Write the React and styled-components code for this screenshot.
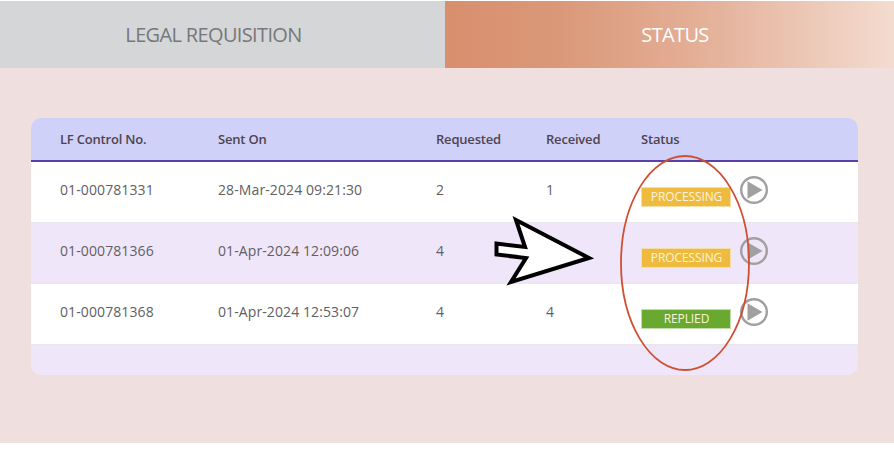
import styled, { createGlobalStyle } from "styled-components";

const rows = [
  { id: "01-000781331", sent: "28-Mar-2024 09:21:30", requested: "2", received: "1", status: "PROCESSING" },
  { id: "01-000781366", sent: "01-Apr-2024 12:09:06", requested: "4", received: "", status: "PROCESSING" },
  { id: "01-000781368", sent: "01-Apr-2024 12:53:07", requested: "4", received: "4", status: "REPLIED" },
];

const GlobalStyle = createGlobalStyle`
  html, body {
    margin: 0;
    padding: 0;
    background: #fff;
    font-family: "Open Sans", "Liberation Sans", sans-serif;
  }
`;

const Page = styled.div`
  position: relative;
  width: 894px;
  height: 457px;
  overflow: hidden;
  padding-top: 1px;
  box-sizing: border-box;
`;

const Tabs = styled.div`
  display: flex;
  height: 67px;
`;

const Tab = styled.div`
  flex: ${(props) => (props.$active ? "0 0 449px" : "0 0 445px")};
  display: flex;
  align-items: center;
  justify-content: center;
  padding-left: ${(props) => (props.$active ? "11px" : "0")};
  padding-right: ${(props) => (props.$active ? "0" : "18px")};
  padding-bottom: 1px;
  box-sizing: border-box;
  font-size: 20px;
  letter-spacing: -0.65px;
  color: ${(props) => (props.$active ? "#fff" : "#77787a")};
  background: ${(props) =>
    props.$active
      ? "linear-gradient(90deg, #d88f6e 0%, #da9878 25%, #e5b29b 60%, #f3dccf 100%)"
      : "#d4d6d8"};
`;

const Body = styled.div`
  height: 375px;
  padding: 50px 36px 0 31px;
  box-sizing: border-box;
  background: #efdfdf;
`;

const Card = styled.div`
  height: 257px;
  border-radius: 10px;
  overflow: hidden;
  background: #f0e6f9;
`;

const HeaderRow = styled.div`
  display: grid;
  grid-template-columns: 158px 218px 110px 95px 1fr;
  align-items: center;
  height: 44px;
  padding-left: 29px;
  box-sizing: border-box;
  background: #d0d1f8;
  border-bottom: 2px solid #5b40a8;
  font-size: 13px;
  font-weight: 600;
  letter-spacing: -0.2px;
  color: #4f4450;
`;

const Row = styled.div`
  display: grid;
  grid-template-columns: 158px 218px 110px 95px 1fr;
  align-items: center;
  height: 61px;
  padding-left: 29px;
  padding-bottom: 5px;
  box-sizing: border-box;
  border-bottom: 1px solid #e9e6ee;
  background: ${(props) => (props.$alt ? "#f0e6f9" : "#fff")};
  font-size: 14px;
  letter-spacing: 0.1px;
  color: #606064;
`;

const StatusCell = styled.div`
  display: flex;
  align-self: start;
  align-items: flex-start;
  gap: 8px;
  margin-top: 13px;
`;

const Badge = styled.span`
  display: block;
  width: 90px;
  height: 20px;
  margin-top: 12px;
  padding-left: 1px;
  box-sizing: border-box;
  line-height: 19px;
  text-align: center;
  font-size: 12px;
  letter-spacing: -0.1px;
  color: #fbf3dc;
  background: ${(props) => (props.$replied ? "#69a92f" : "#efbb3f")};
  box-shadow: 0 0 0 1px ${(props) => (props.$replied ? "#c4dcae" : "#f6deaa")} inset;
`;

const PlayIcon = styled.svg`
  display: block;
  width: 30px;
  height: 30px;
`;

const Overlay = styled.svg`
  position: absolute;
  left: 0;
  top: 0;
  pointer-events: none;
`;

const Play = () => (
  <PlayIcon viewBox="0 0 30 30">
    <circle cx="15" cy="15" r="12.8" fill="none" stroke="#a0a0a0" strokeWidth="2.4" />
    <path d="M8.5 6.2 L23.5 15 L8.5 23.8 Z" fill="#a0a0a0" />
  </PlayIcon>
);

export default function App() {
  return (
    <Page>
      <GlobalStyle />
      <Tabs>
        <Tab>LEGAL REQUISITION</Tab>
        <Tab $active>STATUS</Tab>
      </Tabs>
      <Body>
        <Card>
          <HeaderRow>
            <span>LF Control No.</span>
            <span>Sent On</span>
            <span>Requested</span>
            <span>Received</span>
            <span>Status</span>
          </HeaderRow>
          {rows.map((row, i) => (
            <Row key={row.id} $alt={i % 2 === 1}>
              <span>{row.id}</span>
              <span>{row.sent}</span>
              <span>{row.requested}</span>
              <span>{row.received}</span>
              <StatusCell>
                <Badge $replied={row.status === "REPLIED"}>{row.status}</Badge>
                <Play />
              </StatusCell>
            </Row>
          ))}
        </Card>
      </Body>
      <Overlay width="894" height="457" viewBox="0 0 894 457">
        <ellipse cx="685" cy="263" rx="64" ry="107" fill="none" stroke="#cf4f32" strokeWidth="1.8" />
        <path
          d="M516 220 L589 258 L511 282 L526 258 L496.5 254.5 L496.5 243.5 L525 247 Z"
          fill="#fff"
          stroke="#000"
          strokeWidth="4"
        />
      </Overlay>
    </Page>
  );
}
